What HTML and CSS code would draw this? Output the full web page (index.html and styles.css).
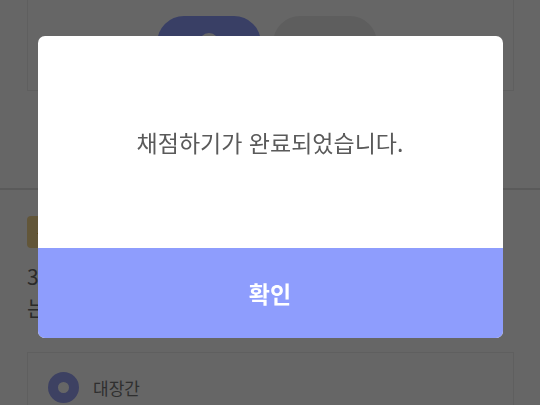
FILE: index.html
```html
<!DOCTYPE html>
<html lang="ko">
<head>
<meta charset="utf-8">
<title>채점 완료</title>
<link rel="stylesheet" href="styles.css">
</head>
<body>
<div class="page">
  <section class="top-card">
    <button class="ox ox-o"><span class="o-mark"></span></button>
    <button class="ox ox-x"><span class="x-mark">✕</span></button>
  </section>
  <div class="divider"></div>
  <section class="question">
    <span class="tag">문제</span>
    <p class="q-text">3. 대장장이가 일하<br>는 곳은?</p>
    <div class="option">
      <span class="radio"></span>
      <span class="opt-label">대장간</span>
    </div>
  </section>
</div>

<div class="backdrop">
  <div class="modal">
    <div class="modal-body">채점하기가 완료되었습니다.</div>
    <button class="modal-btn">확인</button>
  </div>
</div>
</body>
</html>
```

FILE: styles.css
```css
* { box-sizing: border-box; }

html, body {
  margin: 0;
  padding: 0;
  width: 540px;
  height: 405px;
  overflow: hidden;
  background: #ffffff;
  font-family: "Noto Sans CJK KR", "Noto Sans", sans-serif;
}

.page {
  display: flex;
  flex-direction: column;
}

.top-card {
  margin: 0 26px 0 27px;
  height: 91px;
  border: 1px solid #eeeeee;
  border-top: none;
  display: flex;
  justify-content: center;
  gap: 12px;
  padding-top: 16px;
  padding-right: 8px;
}

.ox {
  flex: 0 0 104px;
  height: 54px;
  border: none;
  border-radius: 27px;
  display: flex;
  align-items: center;
  justify-content: center;
  padding: 0;
}

.ox-o { background: #8e9dfd; }
.ox-x { background: #ebebeb; }

.o-mark {
  width: 20px;
  height: 20px;
  border: 4px solid #ffffff;
  border-radius: 50%;
}

.x-mark {
  font-size: 20px;
  color: #888888;
  line-height: 20px;
}

.divider {
  margin-top: 97px;
  height: 2px;
  background: #e0e0e0;
}

.question {
  padding: 26px 26px 0 27px;
  display: flex;
  flex-direction: column;
  align-items: flex-start;
}

.tag {
  height: 32px;
  width: 70px;
  border-radius: 4px;
  background: #f5d68f;
  color: #8a6a10;
  font-size: 14px;
  line-height: 32px;
  padding-left: 10px;
}

.q-text {
  margin: 13px 0 0;
  font-size: 21px;
  line-height: 31px;
  color: #6a6a6a;
}

.option {
  margin-top: 29px;
  width: 487px;
  height: 70px;
  border: 1px solid #eeeeee;
  display: flex;
  align-items: flex-start;
  gap: 14px;
  padding: 19px 0 0 20px;
}

.radio {
  width: 31px;
  height: 31px;
  border-radius: 50%;
  border: 10px solid #9aa3f5;
  background: #ffffff;
}

.opt-label {
  font-size: 17px;
  line-height: 31px;
  color: #777777;
}

.backdrop {
  position: fixed;
  inset: 0;
  background: rgba(0, 0, 0, 0.6);
  display: flex;
  justify-content: center;
  align-items: flex-start;
  padding-top: 36px;
}

.modal {
  width: 465px;
  border-radius: 7px;
  overflow: hidden;
  background: #ffffff;
  display: flex;
  flex-direction: column;
}

.modal-body {
  height: 212px;
  display: flex;
  align-items: center;
  justify-content: center;
  font-size: 23px;
  color: #5a5a5a;
}

.modal-btn {
  height: 90px;
  border: none;
  background: #8e9dfd;
  color: #ffffff;
  font-family: "Noto Sans CJK KR", "Noto Sans", sans-serif;
  font-size: 23px;
  font-weight: 700;
  padding: 0;
}
```
